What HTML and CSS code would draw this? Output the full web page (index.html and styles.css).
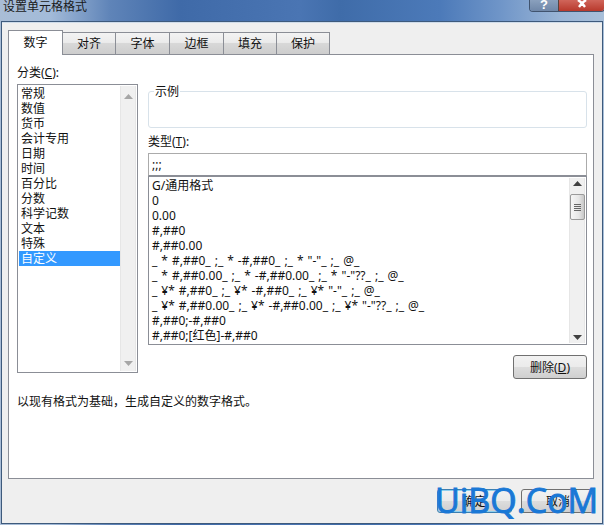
FILE: index.html
```html
<!DOCTYPE html>
<html lang="zh-CN">
<head>
<meta charset="utf-8">
<title>设置单元格格式</title>
<link rel="stylesheet" href="styles.css">
</head>
<body>
<div class="window">
  <header class="titlebar">
    <span class="title">设置单元格格式</span>
    <div class="caption">
      <span class="cap-help">?</span>
      <span class="cap-close">
        <svg width="14" height="9" viewBox="0 0 14 9"><path d="M3 0 L7 3 L11 0 M7 3 L4 7 M7 3 L10 7" fill="none" stroke="#fff" stroke-width="2.4"/></svg>
      </span>
    </div>
  </header>
  <div class="client">
    <nav class="tabs">
      <span class="tab active">数字</span>
      <span class="tab w52">对齐</span>
      <span class="tab">字体</span>
      <span class="tab">边框</span>
      <span class="tab w52">填充</span>
      <span class="tab w52">保护</span>
    </nav>
    <main class="panel">
      <div class="columns">
        <section class="cat">
          <label class="lbl">分类(<u>C</u>):</label>
          <div class="listbox cat-list">
            <ul class="items">
              <li>常规</li><li>数值</li><li>货币</li><li>会计专用</li><li>日期</li><li>时间</li><li>百分比</li><li>分数</li><li>科学记数</li><li>文本</li><li>特殊</li><li class="sel">自定义</li>
            </ul>
            <div class="scroll">
              <svg class="arrow" width="9" height="5" viewBox="0 0 9 5"><path d="M4.5 0 L9 5 H0 Z" fill="#a6a6a6"/></svg>
              <svg class="arrow" width="9" height="5" viewBox="0 0 9 5"><path d="M0 0 H9 L4.5 5 Z" fill="#a6a6a6"/></svg>
            </div>
          </div>
        </section>
        <section class="fmt">
          <fieldset class="sample"><legend>示例</legend></fieldset>
          <label class="lbl type-lbl">类型(<u>T</u>):</label>
          <div class="input">;;;</div>
          <div class="listbox fmt-list">
            <ul class="items">
              <li>G/通用格式</li>
              <li>0</li>
              <li>0.00</li>
              <li>#,##0</li>
              <li>#,##0.00</li>
              <li>_ * #,##0_ ;_ * -#,##0_ ;_ * "-"_ ;_ @_</li>
              <li>_ * #,##0.00_ ;_ * -#,##0.00_ ;_ * "-"??_ ;_ @_</li>
              <li>_ ¥* #,##0_ ;_ ¥* -#,##0_ ;_ ¥* "-"_ ;_ @_</li>
              <li>_ ¥* #,##0.00_ ;_ ¥* -#,##0.00_ ;_ ¥* "-"??_ ;_ @_</li>
              <li>#,##0;-#,##0</li>
              <li>#,##0;[红色]-#,##0</li>
            </ul>
            <div class="scroll">
              <svg class="arrow" width="9" height="5" viewBox="0 0 9 5"><path d="M4.5 0 L9 5 H0 Z" fill="#404040"/></svg>
              <div class="thumb"><i></i><i></i><i></i><i></i></div>
              <svg class="arrow end" width="9" height="5" viewBox="0 0 9 5"><path d="M0 0 H9 L4.5 5 Z" fill="#404040"/></svg>
            </div>
          </div>
          <div class="del-row"><button class="btn del">删除(<u>D</u>)</button></div>
        </section>
      </div>
      <p class="desc">以现有格式为基础，生成自定义的数字格式。</p>
    </main>
    <footer class="footer">
      <button class="btn ok">确定</button>
      <button class="btn cancel">取消</button>
    </footer>
  </div>
  <div class="watermark">UiBQ.CoM</div>
</div>
</body>
</html>
```
FILE: styles.css
```css
* { box-sizing: border-box; }
html, body { margin: 0; padding: 0; }
body {
  width: 604px; height: 525px; overflow: hidden;
  font: 12px/15px "Noto Sans", "Noto Sans CJK SC", sans-serif;
  color: #111;
  background: #fff;
}
.window {
  position: relative; width: 604px; height: 525px;
  display: flex; flex-direction: column;
  background: linear-gradient(90deg, #a9bdd6 0, #a3bbd9 50px, #5f84b8 110px, #3f6aa8 180px, #4a75b3 300px, #3f6ca9 340px, #4c7ab9 440px, #6f95c8 500px, #9ab5d6 560px, #a8bfd9 604px);
}
.titlebar { height: 21px; flex: none; display: flex; justify-content: space-between; overflow: hidden; }
.title { padding-left: 3px; line-height: 13px; font-size: 12px; color: #1a1a1a; }
.caption { display: flex; height: 12px; margin-right: -1px; border: 1px solid #40536e; border-top: 0; border-radius: 0 0 4px 4px; overflow: hidden; }
.cap-help { width: 28px; background: linear-gradient(#8aa0bd, #6f87a8); color: #fff; font: bold 13px/10px "Liberation Sans", sans-serif; text-align: center; }
.cap-close { width: 46px; background: linear-gradient(#d0655a, #b8392c); text-align: center; line-height: 0; border-left: 1px solid #55433f; }
.client {
  flex: 1; margin-left: 1px; margin-right: 1px; margin-bottom: 1px;
  background: #efefef;
  border: 1px solid #3e5a7c;
  box-shadow: inset 0 1px 0 #cfdcea;
  padding: 8px 7px 0 6px;
  display: flex; flex-direction: column;
}
.tabs { display: flex; height: 24px; flex: none; align-items: flex-end; position: relative; z-index: 1; }
.tab {
  width: 54px; height: 22px;
  border: 1px solid #8b8e96; border-bottom: 0; border-left: 0;
  background: linear-gradient(#f3f3f3 0, #ebebeb 45%, #d8d8d8 50%, #cdcdcd 100%);
  text-align: center; line-height: 22px; font-size: 12px;
}
.tab.w52 { width: 53px; }
.tab.active {
  width: 55px; height: 25px; margin-bottom: -1px;
  background: #fff; border-left: 1px solid #8b8e96; line-height: 24px;
}
.panel {
  width: 586px; height: 425px; flex: none;
  background: #fff; border: 1px solid #8b8e96;
  padding: 11px 6px 0 8px;
  display: flex; flex-direction: column;
}
.columns { display: flex; gap: 10px; }
.lbl { display: block; height: 18px; line-height: 13px; }
.cat { width: 121px; flex: none; }
.cat-list { height: 289px; }
.listbox { display: flex; border: 1px solid #8b8e96; background: #fff; padding: 1px; }
.items { flex: 1; margin: 0; padding: 0; list-style: none; min-width: 0; overflow: hidden; }
.items li { height: 15px; padding-left: 2px; white-space: nowrap; line-height: 15px; }
.items li.sel { background: #3399ff; color: #fff; }
.scroll {
  width: 16px; flex: none; background: #f0f0f0;
  border-left: 1px solid #e6e6e6; border-right: 1px solid #e6e6e6;
  display: flex; flex-direction: column; align-items: center; justify-content: space-between;
  padding: 8px 0 5px;
}
.fmt { width: 439px; flex: none; }
.sample {
  margin: 19px 0 0; height: 43px; padding: 0 0 0 5px;
  border: 1px solid #d8e2ea; border-radius: 3px;
}
.sample legend { padding: 0 1px; line-height: 13px; font-size: 12px; }
.type-lbl { margin-top: 6px; height: 19px; line-height: 15px; }
.input { height: 23px; border: 1px solid #ababab; border-bottom-color: #8b8e96; padding: 2px 3px; line-height: 18px; background: #fff; }
.fmt-list { height: 169px; padding: 1px 1px 1px 2px; }
.fmt-list .items li { padding-left: 1px; word-spacing: 0.9px; }
.fmt-list .scroll { padding: 3px 0; justify-content: flex-start; }
.arrow { flex: none; }
.arrow.end { margin-top: auto; }
.thumb {
  width: 15px; height: 26px; margin-top: 8px;
  border: 1px solid #9a9a9a; border-radius: 2px;
  background: linear-gradient(90deg, #f6f6f6, #e6e6e6 60%, #c8c8c8);
  display: flex; flex-direction: column; align-items: center; justify-content: center; gap: 1px;
}
.thumb i { display: block; width: 7px; height: 1px; background: #666; }
.del-row { display: flex; justify-content: flex-end; margin-top: 10px; }
.btn {
  border: 1px solid #707070; border-radius: 3px;
  background: linear-gradient(#f2f2f2 0, #ebebeb 48%, #dddddd 50%, #cfcfcf 100%);
  font: 12px/15px "Noto Sans", "Noto Sans CJK SC", sans-serif; color: #111;
  padding: 0; height: 24px;
}
.del { width: 74px; }
.desc { margin: 15px 0 0 0; line-height: 15px; }
.footer { display: flex; justify-content: flex-end; gap: 9px; padding-top: 10px; }
.ok { width: 75px; border-color: #3c7fb1; box-shadow: inset 0 0 0 1px #8fd0ee; }
.cancel { width: 74px; }
.watermark {
  position: absolute; left: 435px; top: 482px;
  font: 34px/36px "Open Sans", "Liberation Sans", sans-serif;
  color: #1a78d6; white-space: nowrap;
  -webkit-text-stroke: 1px #1a78d6;
}
```
